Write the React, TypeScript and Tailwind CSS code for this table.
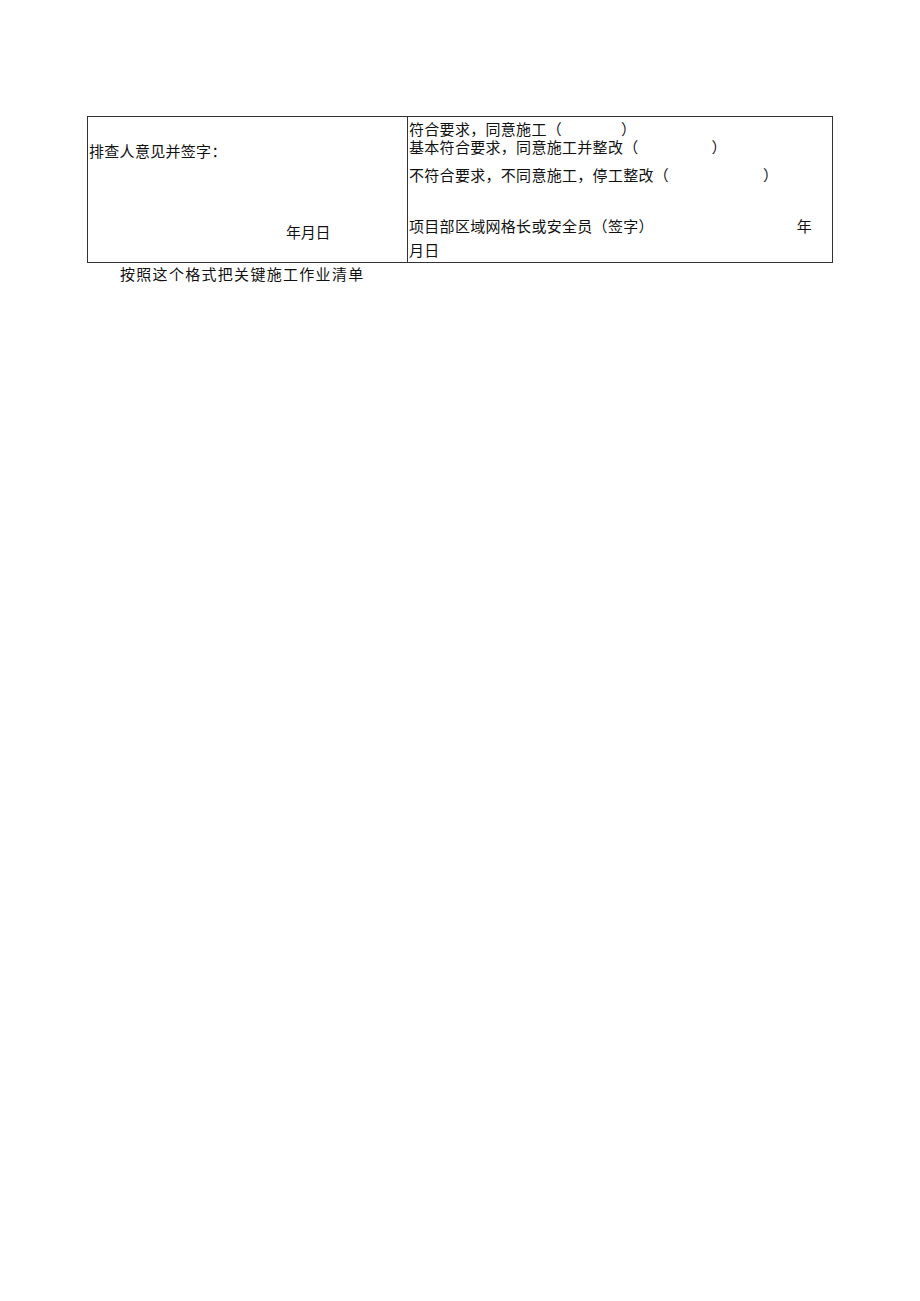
import React from "react";

export default function App() {
  return (
    <div
      className="min-h-[1301px] w-[920px] bg-white text-[#111]"
      style={{ fontFamily: '"Noto Sans CJK SC", "Noto Sans", sans-serif' }}
    >
      <div className="pt-[116px] pl-[87px]">
        <div className="flex w-[746px] h-[147px] border border-[#333]">
          <div className="w-[320px] border-r border-[#333] flex flex-col text-[15px] leading-[18px] tracking-[0.3px]">
            <div className="mt-[25px] pl-[1px]">排查人意见并签字：</div>
            <div className="mt-[63px] pl-[198px] tracking-[-0.3px]">年月日</div>
          </div>
          <div className="flex-1 flex flex-col text-[15px] leading-[18px] tracking-[0.3px] pl-[1px]">
            <div className="mt-[3px] flex">
              <span>符合要求，同意施工（</span>
              <span className="inline-block w-[59px]" />
              <span>）</span>
            </div>
            <div className="flex">
              <span>基本符合要求，同意施工并整改（</span>
              <span className="inline-block w-[73px]" />
              <span>）</span>
            </div>
            <div className="mt-[10px] flex">
              <span>不符合要求，不同意施工，停工整改（</span>
              <span className="inline-block w-[94px]" />
              <span>）</span>
            </div>
            <div className="mt-[33px] flex justify-between pr-[20px]">
              <span>项目部区域网格长或安全员（签字）</span>
              <span>年</span>
            </div>
            <div className="mt-[6px]">月日</div>
          </div>
        </div>
        <div className="pl-[33px] text-[15px] leading-[22px] tracking-[1.3px]">
          按照这个格式把关键施工作业清单
        </div>
      </div>
    </div>
  );
}
